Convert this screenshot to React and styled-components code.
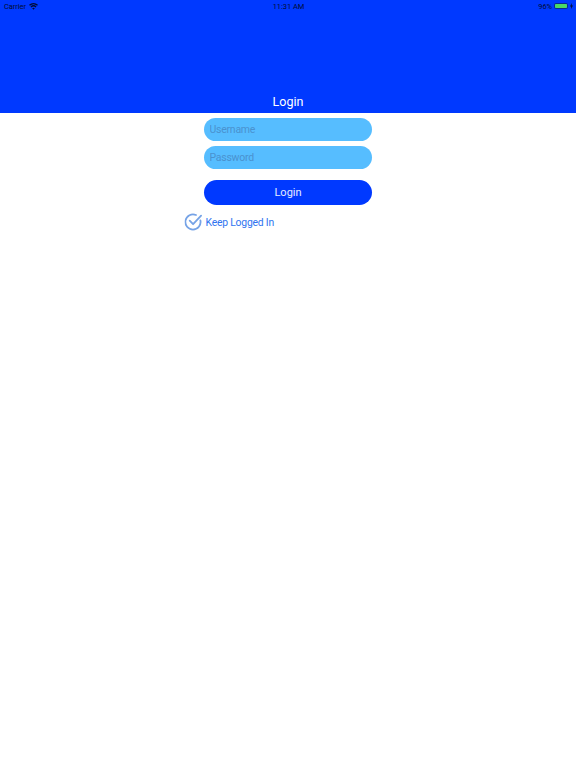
import React from "react";
import styled, { createGlobalStyle } from "styled-components";

const Global = createGlobalStyle`
  html, body { margin: 0; padding: 0; background: #fff; }
  body { font-family: Roboto, "Liberation Sans", Arial, sans-serif; }
`;

const Page = styled.div`
  width: 576px;
  height: 768px;
  overflow: hidden;
  background: #fff;
  display: flex;
  flex-direction: column;
  align-items: center;
`;

const Header = styled.header`
  width: 100%;
  height: 112.5px;
  background: #0039ff;
  display: flex;
  flex-direction: column;
  justify-content: space-between;
  align-items: stretch;
`;

const StatusBar = styled.div`
  height: 12px;
  padding: 0 3px 0 4px;
  display: grid;
  grid-template-columns: 1fr auto 1fr;
  align-items: center;
  font-size: 7.5px;
  letter-spacing: -0.05px;
  color: #020c33;
`;

const StatusLeft = styled.div`
  display: flex;
  align-items: center;
  gap: 3px;
`;

const StatusRight = styled.div`
  display: flex;
  align-items: center;
  justify-content: flex-end;
  gap: 2px;
`;

const Battery = styled.div`
  box-sizing: border-box;
  width: 14px;
  height: 6px;
  border: 0.5px solid #0a2a8c;
  border-radius: 1.5px;
  display: flex;
`;

const BatteryFill = styled.div`
  flex: 1;
  background: #4cd964;
  border-radius: 1px;
`;

const Title = styled.h1`
  margin: 0;
  height: 20px;
  font-size: 12.5px;
  font-weight: 400;
  line-height: 18px;
  text-align: center;
  color: #fff;
`;

const Form = styled.form`
  width: 168px;
  margin-top: 5.5px;
  display: flex;
  flex-direction: column;
`;

const Field = styled.input`
  box-sizing: border-box;
  width: 100%;
  height: 23px;
  margin-bottom: 5px;
  padding: 0 5.5px;
  border: 0;
  outline: 0;
  border-radius: 12px;
  background: #56bdff;
  font: 400 10.5px Roboto, "Liberation Sans", Arial, sans-serif;
  letter-spacing: -0.25px;
  &::placeholder { color: #4a92cf; opacity: 1; }
`;

const Submit = styled.button`
  width: 100%;
  height: 25px;
  margin-top: 6px;
  border: 0;
  border-radius: 13px;
  background: #0039ff;
  color: #e6ecff;
  font: 400 11px Roboto, "Liberation Sans", Arial, sans-serif;
`;

const KeepRow = styled.div`
  width: 168px;
  margin-top: 8px;
  display: flex;
  align-items: center;
  gap: 3px;
  transform: translateX(-19.5px);
`;

const KeepLabel = styled.span`
  font-size: 10.4px;
  letter-spacing: -0.22px;
  color: #2f74f0;
`;

const Wifi = () => (
  <svg width="9" height="7" viewBox="0 0 18 14" fill="#020c33" aria-hidden="true">
    <path d="M9 13.5 6.4 10.6a3.8 3.8 0 0 1 5.2 0zM4.8 8.8 3 6.8a9 9 0 0 1 12 0l-1.8 2a6.3 6.3 0 0 0-8.4 0zM1.8 5.5 0 3.5a13.4 13.4 0 0 1 18 0l-1.8 2a10.8 10.8 0 0 0-14.4 0z" />
  </svg>
);

const Bolt = () => (
  <svg width="3" height="6" viewBox="0 0 3 6" fill="#020c33" aria-hidden="true">
    <path d="M1.8 0 0 3.4h1.2L1 6l2-3.6H1.7z" />
  </svg>
);

const Check = () => (
  <svg width="18" height="18" viewBox="0 0 18 18" fill="none" stroke="#76a3e6" strokeWidth="1.8" strokeLinecap="round" strokeLinejoin="round" aria-hidden="true">
    <path d="M15.9 7.4A7.6 7.6 0 1 1 11.5 2" />
    <path d="M5.2 7.6 8.6 11.2 16.6 2.6" />
  </svg>
);

export default function App() {
  return (
    <Page>
      <Global />
      <Header>
        <StatusBar>
          <StatusLeft>Carrier <Wifi /></StatusLeft>
          <span>11:31 AM</span>
          <StatusRight>96% <Battery><BatteryFill /></Battery> <Bolt /></StatusRight>
        </StatusBar>
        <Title>Login</Title>
      </Header>
      <Form>
        <Field placeholder="Username" />
        <Field placeholder="Password" />
        <Submit type="button">Login</Submit>
      </Form>
      <KeepRow>
        <Check />
        <KeepLabel>Keep Logged In</KeepLabel>
      </KeepRow>
    </Page>
  );
}
